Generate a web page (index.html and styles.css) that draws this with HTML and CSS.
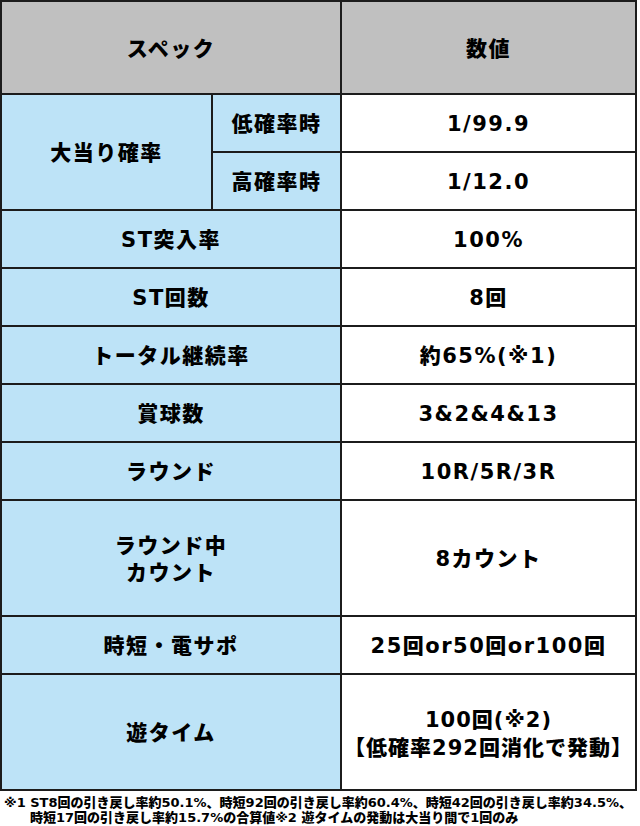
FILE: index.html
```html
<!DOCTYPE html>
<html lang="ja">
<head>
<meta charset="utf-8">
<title>スペック</title>
<link rel="stylesheet" href="styles.css">
</head>
<body>
<table class="spec">
  <colgroup>
    <col class="c1"><col class="c2"><col class="c3">
  </colgroup>
  <tr class="r-head">
    <th colspan="2" class="head">スペック</th>
    <th class="head">数値</th>
  </tr>
  <tr class="r-std">
    <th rowspan="2" class="label">大当り確率</th>
    <th class="label">低確率時</th>
    <td class="val">1/99.9</td>
  </tr>
  <tr class="r-std">
    <th class="label">高確率時</th>
    <td class="val">1/12.0</td>
  </tr>
  <tr class="r-std">
    <th colspan="2" class="label">ST突入率</th>
    <td class="val">100%</td>
  </tr>
  <tr class="r-std">
    <th colspan="2" class="label">ST回数</th>
    <td class="val">8回</td>
  </tr>
  <tr class="r-std">
    <th colspan="2" class="label">トータル継続率</th>
    <td class="val">約65%(※1)</td>
  </tr>
  <tr class="r-std">
    <th colspan="2" class="label">賞球数</th>
    <td class="val">3&amp;2&amp;4&amp;13</td>
  </tr>
  <tr class="r-std">
    <th colspan="2" class="label">ラウンド</th>
    <td class="val">10R/5R/3R</td>
  </tr>
  <tr class="r-tall">
    <th colspan="2" class="label">ラウンド中<br>カウント</th>
    <td class="val">8カウント</td>
  </tr>
  <tr class="r-std">
    <th colspan="2" class="label">時短・電サポ</th>
    <td class="val">25回or50回or100回</td>
  </tr>
  <tr class="r-tall">
    <th colspan="2" class="label">遊タイム</th>
    <td class="val tight">100回(※2)<br>【低確率292回消化で発動】</td>
  </tr>
</table>
<p class="note">※1 ST8回の引き戻し率約50.1%、時短92回の引き戻し率約60.4%、時短42回の引き戻し率約34.5%、時短17回の引き戻し率約15.7%の合算値※2 遊タイムの発動は大当り間で1回のみ</p>
</body>
</html>
```
FILE: styles.css
```css
html, body {
  margin: 0;
  padding: 0;
  background: #ffffff;
}

body {
  font-family: "DejaVu Sans", "Noto Sans CJK JP", sans-serif;
  color: #000;
}

.spec {
  border-collapse: separate;
  border-spacing: 0;
  width: 637px;
  table-layout: fixed;
  border-top: 2px solid #1c1c1c;
  border-left: 2px solid #1c1c1c;
}

.c1 { width: 211px; }
.c2 { width: 129px; }
.c3 { width: 295px; }

.spec th,
.spec td {
  border-right: 2px solid #1c1c1c;
  border-bottom: 2px solid #1c1c1c;
  padding: 3px 0 0 0;
  text-align: center;
  vertical-align: middle;
  font-size: 21px;
  font-weight: 900;
  letter-spacing: 1.5px;
  line-height: 27px;
}

.r-head { height: 93px; }
.r-std { height: 58px; }
.r-tall { height: 116px; }

.head {
  background: #c0c0c0;
}

.label {
  background: #bde3f7;
}

.val {
  background: #ffffff;
}

.val.tight {
  letter-spacing: 1px;
  line-height: 28px;
}

.note {
  margin: 4px 0 0 4px;
  padding-left: 26px;
  text-indent: -26px;
  width: 604px;
  font-size: 13px;
  font-weight: 900;
  line-height: 15px;
}
```
